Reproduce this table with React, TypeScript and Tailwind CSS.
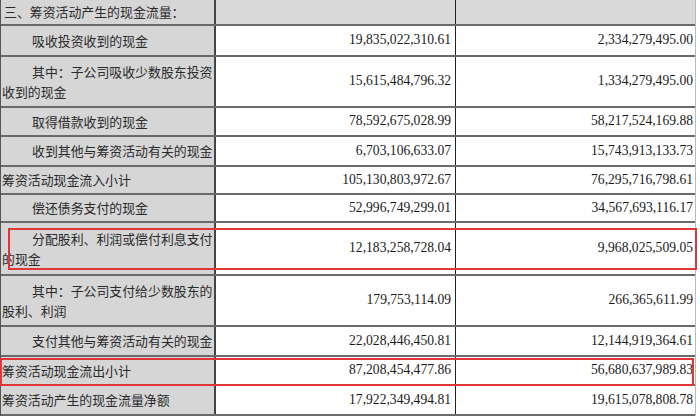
import React from "react";

type Row = {
  h: number;
  label: React.ReactNode;
  a: string;
  b: string;
  header?: boolean;
};

const indent = (first: string, rest?: string) => (
  <span className="block leading-[20px]">
    <span className="block pl-[30px]">{first}</span>
    {rest && <span className="block">{rest}</span>}
  </span>
);

const rows: Row[] = [
  { h: 26, label: <span className="pl-[2px]">三、筹资活动产生的现金流量：</span>, a: "", b: "", header: true },
  { h: 31, label: indent("吸收投资收到的现金"), a: "19,835,022,310.61", b: "2,334,279,495.00" },
  { h: 51, label: indent("其中：子公司吸收少数股东投资", "收到的现金"), a: "15,615,484,796.32", b: "1,334,279,495.00" },
  { h: 29, label: indent("取得借款收到的现金"), a: "78,592,675,028.99", b: "58,217,524,169.88" },
  { h: 30, label: indent("收到其他与筹资活动有关的现金"), a: "6,703,106,633.07", b: "15,743,913,133.73" },
  { h: 28, label: <span>筹资活动现金流入小计</span>, a: "105,130,803,972.67", b: "76,295,716,798.61" },
  { h: 28, label: indent("偿还债务支付的现金"), a: "52,996,749,299.01", b: "34,567,693,116.17" },
  { h: 53, label: indent("分配股利、利润或偿付利息支付", "的现金"), a: "12,183,258,728.04", b: "9,968,025,509.05" },
  { h: 51, label: indent("其中：子公司支付给少数股东的", "股利、利润"), a: "179,753,114.09", b: "266,365,611.99" },
  { h: 30, label: indent("支付其他与筹资活动有关的现金"), a: "22,028,446,450.81", b: "12,144,919,364.61" },
  { h: 29, label: <span>筹资活动现金流出小计</span>, a: "87,208,454,477.86", b: "56,680,637,989.83" },
  { h: 30, label: <span>筹资活动产生的现金流量净额</span>, a: "17,922,349,494.81", b: "19,615,078,808.78" },
];

export default function App() {
  return (
    <div className="relative w-[700px] h-[416px] overflow-hidden bg-white">
      <div className="w-[696px] border-l border-l-[#555] border-r border-r-[#bbb] flex flex-col">
        {rows.map((r, i) => (
          <div
            key={i}
            className={`flex border-b-2 border-b-[#6a6a6a] ${r.header ? "bg-[#d9d9d9]" : ""}`}
            style={{ height: r.h }}
          >
            <div
              className="w-[215px] shrink-0 bg-[#d6d6d6] border-r-2 border-r-[#444] flex items-center text-[12.9px] text-[#2a2a2a] px-[1px]"
              style={{ fontFamily: '"Noto Sans CJK SC", sans-serif' }}
            >
              {r.label}
            </div>
            <div
              className="w-[240px] shrink-0 border-r border-r-[#222] flex items-center justify-end pr-[4px] text-[13.6px] text-[#1a1a1a]"
              style={{ fontFamily: '"Liberation Serif", serif' }}
            >
              {r.a}
            </div>
            <div
              className="flex-1 flex items-center justify-end pr-[2px] text-[13.6px] text-[#1a1a1a]"
              style={{ fontFamily: '"Liberation Serif", serif' }}
            >
              {r.b}
            </div>
          </div>
        ))}
      </div>
      <div className="absolute left-[8px] top-[228px] w-[689px] h-[42px] border-2 border-[#e0363a]" />
      <div className="absolute left-0 top-[358px] w-[694px] h-[28px] border-2 border-[#e0363a]" />
    </div>
  );
}
